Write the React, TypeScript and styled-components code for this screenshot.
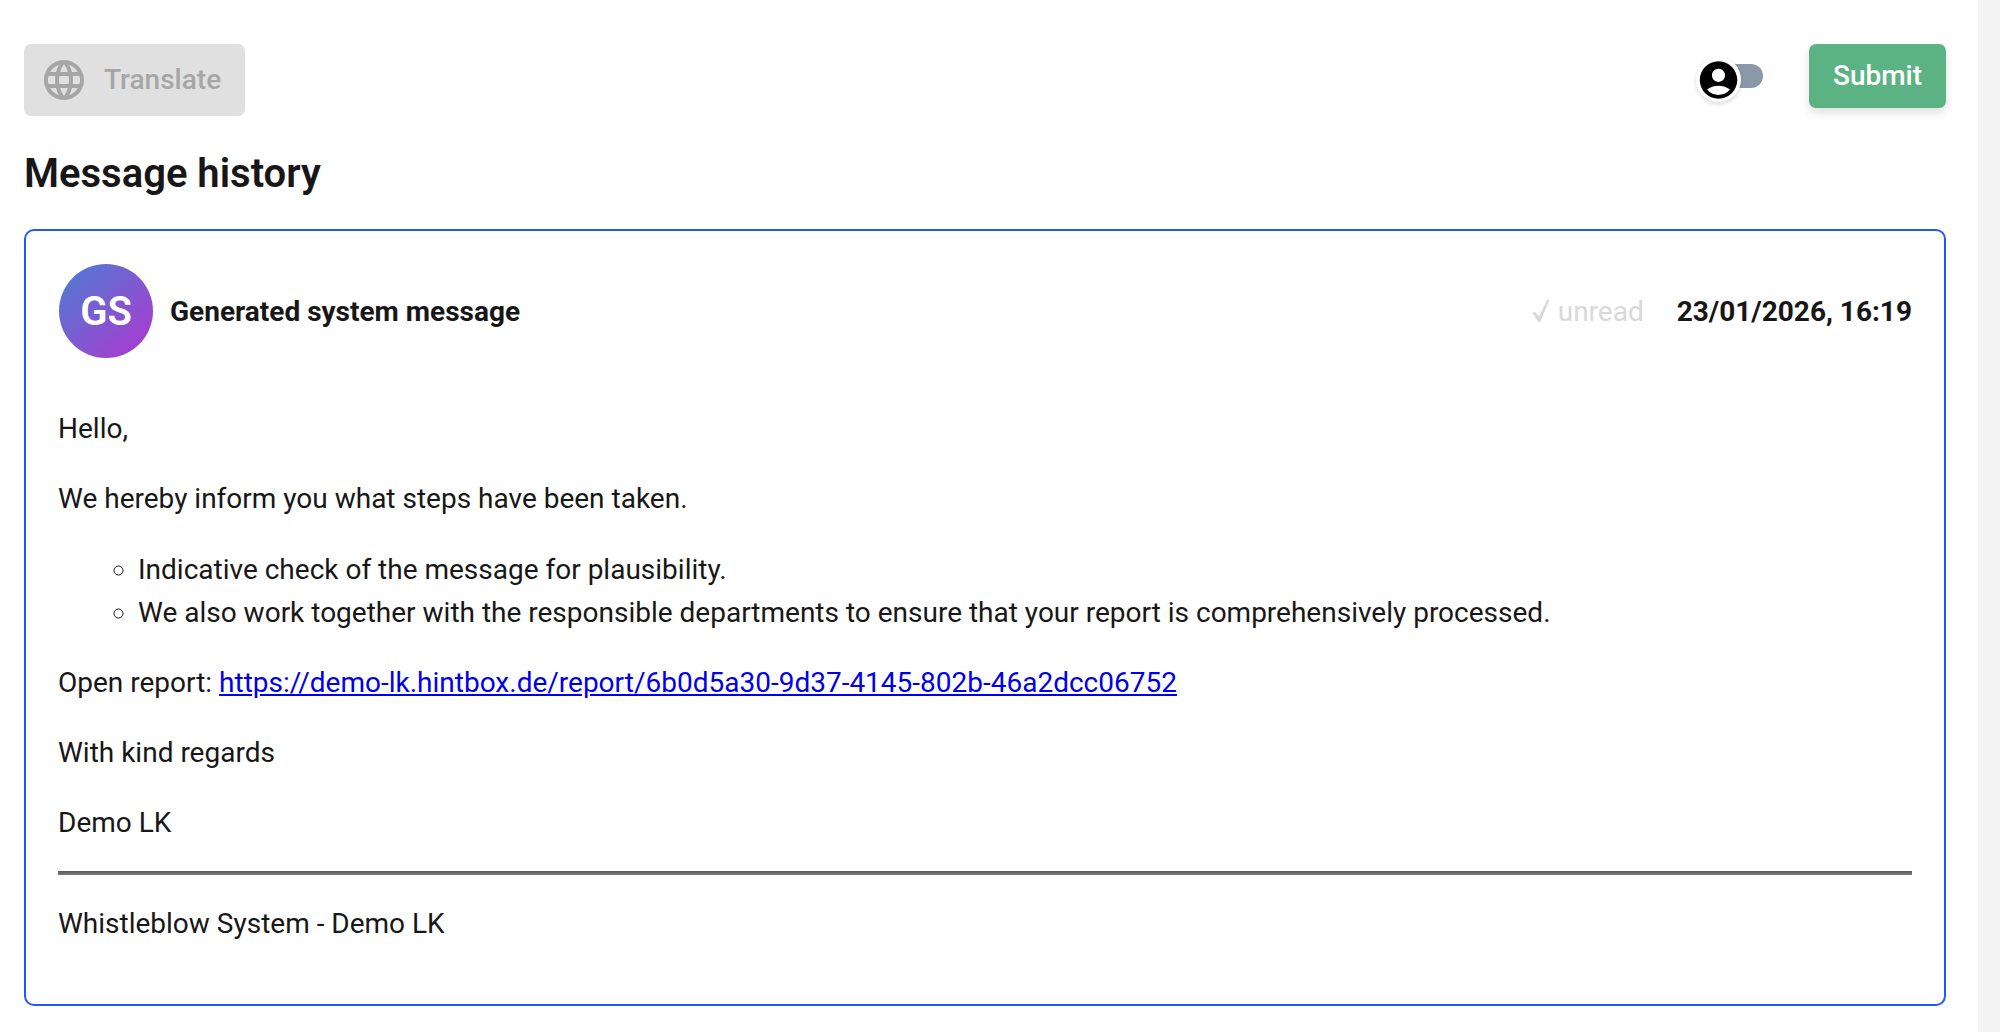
import React from "react";
import styled, { createGlobalStyle } from "styled-components";

const GlobalStyle = createGlobalStyle`
  html, body {
    margin: 0;
    padding: 0;
    background: #fff;
  }
  body {
    font-family: Roboto, "Liberation Sans", sans-serif;
    color: #171717;
  }
`;

const Page = styled.div`
  display: flex;
  height: 1032px;
  overflow: hidden;
`;

const Main = styled.main`
  flex: 1;
  min-width: 0;
  padding: 44px 32px 0 24px;
  box-sizing: border-box;
`;

const ScrollGutter = styled.div`
  width: 22px;
  background: #f4f4f4;
`;

const Toolbar = styled.div`
  display: flex;
  justify-content: space-between;
  align-items: flex-start;
`;

const TranslateButton = styled.button`
  display: flex;
  align-items: center;
  gap: 16px;
  width: 221px;
  height: 72px;
  padding: 0 0 0 16px;
  border: none;
  border-radius: 7px;
  background: #e0e0e0;
  color: #a6a6a6;
  font: 500 28px/1 Roboto, sans-serif;
  box-sizing: border-box;
`;

const Actions = styled.div`
  display: flex;
  align-items: flex-start;
`;

const ToggleTrack = styled.div`
  position: relative;
  width: 60px;
  height: 24px;
  margin: 20px 46px 0 0;
  border-radius: 12px;
  background: #8b98a9;
`;

const ToggleKnob = styled.div`
  position: absolute;
  left: -7px;
  top: -7px;
  width: 45px;
  height: 45px;
  display: flex;
  align-items: center;
  justify-content: center;
  border-radius: 50%;
  background: #fff;
  box-shadow: 0 2px 4px rgba(0, 0, 0, 0.15);
`;

const SubmitButton = styled.button`
  width: 137px;
  height: 64px;
  border: none;
  border-radius: 7px;
  background: #5bb282;
  color: #fff;
  font: 500 28px/1 Roboto, sans-serif;
  box-shadow: 0 5px 10px rgba(0, 0, 0, 0.12);
`;

const Heading = styled.h2`
  margin: 34px 0 0;
  font-size: 40px;
  font-weight: 600;
  line-height: 48px;
`;

const MessageCard = styled.section`
  margin-top: 31px;
  height: 777px;
  padding: 33px 32px 0;
  border: 2px solid #2258f5;
  border-radius: 10px;
  box-sizing: border-box;
`;

const MessageHeader = styled.header`
  display: flex;
  align-items: center;
  gap: 17px;
  padding-left: 1px;
`;

const Avatar = styled.div`
  width: 94px;
  height: 94px;
  display: flex;
  align-items: center;
  justify-content: center;
  border-radius: 50%;
  background: linear-gradient(135deg, #4a80d2, #b035cf);
  color: #fff;
  font-size: 40px;
  font-weight: 600;
`;

const Sender = styled.span`
  flex: 1;
  font-size: 28px;
  font-weight: 700;
`;

const ReadState = styled.span`
  display: flex;
  align-items: center;
  gap: 8px;
  margin-right: 16px;
  color: #d9d9d9;
  font-size: 28px;
`;

const Timestamp = styled.span`
  font-size: 28px;
  font-weight: 700;
`;

const MessageBody = styled.div`
  margin-top: 50px;
  font-size: 28px;
  line-height: 42px;

  p {
    margin: 28px 0;
  }
`;

const ActionList = styled.ul`
  margin: 29px 0 28px;
  padding-left: 80px;
  list-style-type: circle;

  li + li {
    margin-top: 1px;
  }
`;

const ReportLink = styled.a`
  color: #0000ee;
  text-decoration: underline;
`;

const Divider = styled.hr`
  margin: -1px 0 28px;
  border: none;
  height: 4px;
  background: linear-gradient(#5c5c5c, #7a7a7a);
`;

const GlobeIcon = () => (
  <svg width="48" height="48" viewBox="0 0 24 24" fill="#a6a6a6">
    <path d="M11.99 2C6.47 2 2 6.48 2 12s4.47 10 9.99 10C17.52 22 22 17.52 22 12S17.52 2 11.99 2zm6.93 6h-2.95c-.32-1.25-.78-2.45-1.38-3.56 1.84.63 3.37 1.91 4.33 3.56zM12 4.04c.83 1.2 1.48 2.53 1.91 3.96h-3.82c.43-1.43 1.08-2.76 1.91-3.96zM4.26 14C4.1 13.36 4 12.69 4 12s.1-1.36.26-2h3.38c-.08.66-.14 1.32-.14 2 0 .68.06 1.34.14 2H4.26zm.82 2h2.95c.32 1.25.78 2.45 1.38 3.56-1.84-.63-3.37-1.9-4.33-3.56zm2.95-8H5.08c.96-1.66 2.49-2.93 4.33-3.56C8.81 5.55 8.35 6.75 8.03 8zM12 19.96c-.83-1.2-1.48-2.53-1.91-3.96h3.82c-.43 1.43-1.08 2.76-1.91 3.96zM14.34 14H9.66c-.09-.66-.16-1.32-.16-2 0-.68.07-1.35.16-2h4.68c.09.65.16 1.32.16 2 0 .68-.07 1.34-.16 2zm.25 5.56c.6-1.11 1.06-2.31 1.38-3.56h2.95c-.96 1.65-2.49 2.93-4.33 3.56zM16.36 14c.08-.66.14-1.32.14-2 0-.68-.06-1.34-.14-2h3.38c.16.64.26 1.31.26 2s-.1 1.36-.26 2h-3.38z" />
  </svg>
);

const AccountIcon = () => (
  <svg width="46" height="46" viewBox="0 0 24 24" fill="#000">
    <path d="M12 2C6.48 2 2 6.48 2 12s4.48 10 10 10 10-4.48 10-10S17.52 2 12 2zm0 4c1.93 0 3.5 1.57 3.5 3.5S13.93 13 12 13s-3.5-1.57-3.5-3.5S10.07 6 12 6zm0 14c-2.03 0-4.43-.82-6.14-2.88C7.55 15.8 9.68 15 12 15s4.45.8 6.14 2.12C16.43 19.18 14.03 20 12 20z" />
  </svg>
);

const CheckIcon = () => (
  <svg width="18" height="24" viewBox="0 0 18 24" fill="#d9d9d9">
    <path d="M0.5 14 L3 12.8 L6.8 17.5 L15.5 0.5 L17.5 1 L8.2 23 L6.4 23 Z" />
  </svg>
);

export default function App() {
  return (
    <Page>
      <GlobalStyle />
      <Main>
        <Toolbar>
          <TranslateButton>
            <GlobeIcon />
            Translate
          </TranslateButton>
          <Actions>
            <ToggleTrack>
              <ToggleKnob>
                <AccountIcon />
              </ToggleKnob>
            </ToggleTrack>
            <SubmitButton>Submit</SubmitButton>
          </Actions>
        </Toolbar>
        <Heading>Message history</Heading>
        <MessageCard>
          <MessageHeader>
            <Avatar>GS</Avatar>
            <Sender>Generated system message</Sender>
            <ReadState>
              <CheckIcon />
              unread
            </ReadState>
            <Timestamp>23/01/2026, 16:19</Timestamp>
          </MessageHeader>
          <MessageBody>
            <p>Hello,</p>
            <p>We hereby inform you what steps have been taken.</p>
            <ActionList>
              <li>Indicative check of the message for plausibility.</li>
              <li>
                We also work together with the responsible departments to ensure
                that your report is comprehensively processed.
              </li>
            </ActionList>
            <p>
              Open report:{" "}
              <ReportLink href="#">
                https://demo-lk.hintbox.de/report/6b0d5a30-9d37-4145-802b-46a2dcc06752
              </ReportLink>
            </p>
            <p>With kind regards</p>
            <p>Demo LK</p>
            <Divider />
            <p>Whistleblow System - Demo LK</p>
          </MessageBody>
        </MessageCard>
      </Main>
      <ScrollGutter />
    </Page>
  );
}
